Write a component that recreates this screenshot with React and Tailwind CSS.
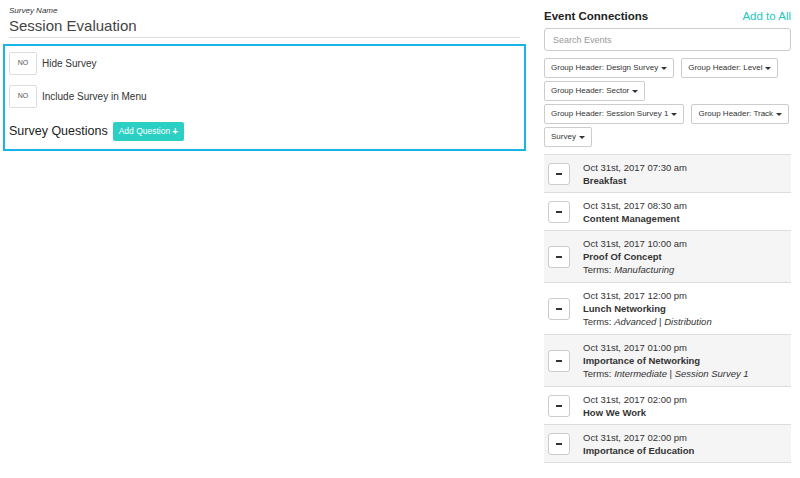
import React from 'react';

const filters = [
    ['Group Header: Design Survey', 'Group Header: Level'],
    ['Group Header: Sector'],
    ['Group Header: Session Survey 1', 'Group Header: Track'],
    ['Survey'],
];

const events = [
    { date: 'Oct 31st, 2017 07:30 am', title: 'Breakfast' },
    { date: 'Oct 31st, 2017 08:30 am', title: 'Content Management' },
    { date: 'Oct 31st, 2017 10:00 am', title: 'Proof Of Concept', terms: ['Manufacturing'] },
    { date: 'Oct 31st, 2017 12:00 pm', title: 'Lunch Networking', terms: ['Advanced', 'Distribution'] },
    { date: 'Oct 31st, 2017 01:00 pm', title: 'Importance of Networking', terms: ['Intermediate', 'Session Survey 1'] },
    { date: 'Oct 31st, 2017 02:00 pm', title: 'How We Work' },
    { date: 'Oct 31st, 2017 02:00 pm', title: 'Importance of Education' },
];

const Caret = () => (
    <span className="inline-block ml-[3px] align-middle w-0 h-0 border-l-[3px] border-r-[3px] border-t-[3px] border-l-transparent border-r-transparent border-t-[#333]" />
);

const Toggle = ({ label }) => (
    <div className="flex items-center h-[23px]">
        <div className="w-[28px] h-[23px] border border-[#ddd] rounded-[2px] flex items-center justify-center text-[7px] text-[#555]">NO</div>
        <span className="ml-[5px] text-[10px] text-[#333]">{label}</span>
    </div>
);

export default function App() {
    return (
        <div className="flex w-[800px] h-[478px] bg-white text-[#333]" style={{ fontFamily: '"Liberation Sans", Arial, sans-serif' }}>
            {/* Left: survey settings */}
            <div className="w-[523px] ml-[3px] pt-[6px]">
                <div className="mx-[6px] border-b border-[#ddd] pb-[1px]">
                    <div className="text-[8px] italic leading-[10px]">Survey Name</div>
                    <div className="text-[15px] leading-[20px] text-[#444]">Session Evaluation</div>
                </div>
                <div className="mt-[6px] border-2 border-[#1ab4e8] px-[4px] pt-[6px] pb-[8px]">
                    <Toggle label="Hide Survey" />
                    <div className="mt-[10px]"><Toggle label="Include Survey in Menu" /></div>
                    <div className="mt-[14px] flex items-center">
                        <span className="text-[12.5px] font-medium text-[#222]">Survey Questions</span>
                        <button className="ml-[5px] h-[19px] px-[6px] bg-[#2ccfc4] text-white text-[8.5px] rounded-[2px] flex items-center">
                            Add Question <span className="ml-[2px] font-bold text-[10px] leading-none">+</span>
                        </button>
                    </div>
                </div>
            </div>

            {/* Right: event connections */}
            <div className="ml-[18px] w-[247px] pt-[8px]">
                <div className="flex items-center justify-between h-[16px]">
                    <h2 className="text-[11.5px] font-bold text-[#222] pt-[1px]">Event Connections</h2>
                    <span className="text-[11.5px] text-[#22c7bd] pt-[1px]">Add to All</span>
                </div>
                <input
                    className="mt-[4px] w-full h-[23px] border border-[#ccc] rounded-[3px] px-[8px] text-[9px] outline-none placeholder-[#999]"
                    placeholder="Search Events"
                />
                <div className="mt-[7px] flex flex-col gap-[3px]">
                    {filters.map((row, i) => (
                        <div key={i} className="flex gap-[7px]">
                            {row.map((f) => (
                                <div key={f} className="h-[20px] px-[6px] border border-[#ccc] rounded-[2px] flex items-center text-[8px] whitespace-nowrap">
                                    {f}<Caret />
                                </div>
                            ))}
                        </div>
                    ))}
                </div>
                <div className="mt-[7px] border-t border-[#ddd]">
                    {events.map((e, i) => (
                        <div key={i} className={`flex items-center border-b border-[#ddd] px-[4px] pt-[6px] pb-[5px] ${i % 2 === 0 ? 'bg-[#f5f5f5]' : 'bg-white'}`}>
                            <div className="w-[22px] h-[22px] shrink-0 bg-white border border-[#ccc] rounded-[3px] flex items-center justify-center">
                                <span className="w-[6px] h-[2px] bg-[#333]" />
                            </div>
                            <div className="ml-[13px] text-[9.5px] leading-[13px]">
                                <div>{e.date}</div>
                                <div className="font-bold">{e.title}</div>
                                {e.terms && (
                                    <div className="leading-[14px]">
                                        Terms:{' '}
                                        {e.terms.map((t, j) => (
                                            <span key={t}>
                                                {j > 0 && ' | '}
                                                <i>{t}</i>
                                            </span>
                                        ))}
                                    </div>
                                )}
                            </div>
                        </div>
                    ))}
                </div>
            </div>
        </div>
    );
}
